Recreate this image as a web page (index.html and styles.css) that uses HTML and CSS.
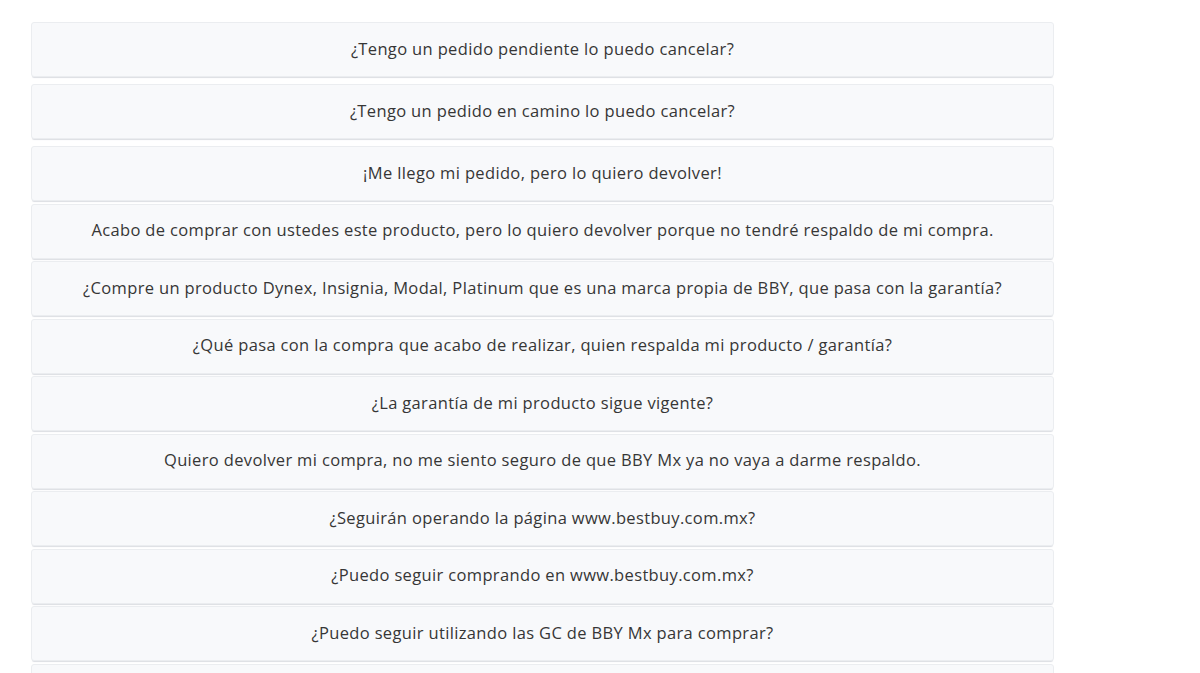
FILE: index.html
```html
<!DOCTYPE html>
<html lang="es">
<head>
<meta charset="utf-8">
<title>Preguntas frecuentes</title>
<link rel="stylesheet" href="styles.css">
</head>
<body>
<main class="faq">
  <div class="item spaced">¿Tengo un pedido pendiente lo puedo cancelar?</div>
  <div class="item spaced">¿Tengo un pedido en camino lo puedo cancelar?</div>
  <div class="item">¡Me llego mi pedido, pero lo quiero devolver!</div>
  <div class="item">Acabo de comprar con ustedes este producto, pero lo quiero devolver porque no tendré respaldo de mi compra.</div>
  <div class="item">¿Compre un producto Dynex, Insignia, Modal, Platinum que es una marca propia de BBY, que pasa con la garantía?</div>
  <div class="item">¿Qué pasa con la compra que acabo de realizar, quien respalda mi producto / garantía?</div>
  <div class="item">¿La garantía de mi producto sigue vigente?</div>
  <div class="item">Quiero devolver mi compra, no me siento seguro de que BBY Mx ya no vaya a darme respaldo.</div>
  <div class="item">¿Seguirán operando la página www.bestbuy.com.mx?</div>
  <div class="item">¿Puedo seguir comprando en www.bestbuy.com.mx?</div>
  <div class="item">¿Puedo seguir utilizando las GC de BBY Mx para comprar?</div>
  <div class="item last"></div>
</main>
</body>
</html>
```

FILE: styles.css
```css
html, body {
  margin: 0;
  padding: 0;
  background: #ffffff;
  height: 673px;
  overflow: hidden;
}
.faq {
  display: flex;
  flex-direction: column;
  width: 1054px;
  height: 673px;
  box-sizing: border-box;
  padding: 22px 0 0 31px;
  overflow: hidden;
  font-family: "Open Sans", "Noto Sans", sans-serif;
}
.item {
  box-sizing: border-box;
  height: 55px;
  margin-bottom: 2.56px;
  display: flex;
  align-items: center;
  justify-content: center;
  background: #f8f9fb;
  border: 1px solid #ebedf0;
  border-radius: 3px;
  box-shadow: 0 2px 1px -1px #dcdee3;
  color: #363636;
  font-size: 16.5px;
  line-height: 20px;
  letter-spacing: 0.35px;
  padding-bottom: 2px;
  flex-shrink: 0;
}
.item.spaced {
  margin-bottom: 7px;
}
```
